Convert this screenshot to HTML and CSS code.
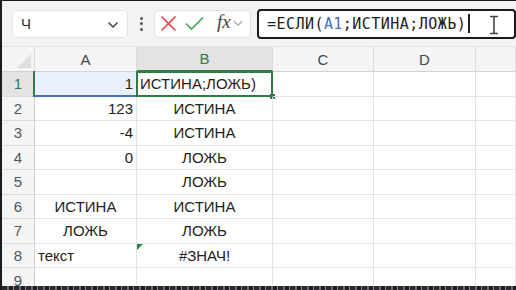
FILE: index.html
```html
<!DOCTYPE html>
<html lang="ru">
<head>
<meta charset="utf-8">
<link rel="stylesheet" href="styles.css">
</head>
<body>
<div class="frame">
  <div class="toolbar">
    <div class="namebox">
      <span class="name">Ч</span>
      <svg class="chev" width="12" height="8" viewBox="0 0 12 8"><path d="M1.5 1.5 L6 6 L10.5 1.5" fill="none" stroke="#444" stroke-width="1.5"/></svg>
    </div>
    <div class="dots"><span></span><span></span><span></span></div>
    <div class="fbtns">
      <svg width="17" height="17" viewBox="0 0 17 17"><path d="M1.5 1.5 L15.5 15.5 M15.5 1.5 L1.5 15.5" stroke="#e0454a" stroke-width="1.7" fill="none"/></svg>
      <svg width="19" height="15" viewBox="0 0 19 15"><path d="M1 7.5 L6.5 13 L18 1.5" stroke="#4aa65b" stroke-width="1.7" fill="none"/></svg>
      <span class="fx">fx</span>
      <svg class="chev2" width="10" height="7" viewBox="0 0 10 7"><path d="M1 1.2 L5 5.2 L9 1.2" fill="none" stroke="#aaa" stroke-width="1.3"/></svg>
    </div>
    <div class="formula">
      <span class="ftext">=ЕСЛИ(<span class="ref">A1</span>;ИСТИНА;ЛОЖЬ)</span><span class="caret"></span>
      <svg class="ibeam" width="10" height="20" viewBox="0 0 10 20"><path d="M1 1.5 H9 M5 1.5 V18.5 M1 18.5 H9" stroke="#444" stroke-width="1.6" fill="none"/></svg>
    </div>
  </div>
  <div class="sheet">
    <div class="grid">
      <div class="corner"><span class="tri"></span></div>
      <div class="ch">A</div>
      <div class="ch sel">B</div>
      <div class="ch">C</div>
      <div class="ch">D</div>
      <div class="ch"></div>

      <div class="rh selr">1</div>
      <div class="c r refcell">1</div>
      <div class="c l active">ИСТИНА;ЛОЖЬ)</div>
      <div class="c"></div><div class="c"></div><div class="c"></div>

      <div class="rh">2</div>
      <div class="c r">123</div>
      <div class="c m">ИСТИНА</div>
      <div class="c"></div><div class="c"></div><div class="c"></div>

      <div class="rh">3</div>
      <div class="c r">-4</div>
      <div class="c m">ИСТИНА</div>
      <div class="c"></div><div class="c"></div><div class="c"></div>

      <div class="rh">4</div>
      <div class="c r">0</div>
      <div class="c m">ЛОЖЬ</div>
      <div class="c"></div><div class="c"></div><div class="c"></div>

      <div class="rh">5</div>
      <div class="c"></div>
      <div class="c m">ЛОЖЬ</div>
      <div class="c"></div><div class="c"></div><div class="c"></div>

      <div class="rh">6</div>
      <div class="c m">ИСТИНА</div>
      <div class="c m">ИСТИНА</div>
      <div class="c"></div><div class="c"></div><div class="c"></div>

      <div class="rh">7</div>
      <div class="c m">ЛОЖЬ</div>
      <div class="c m">ЛОЖЬ</div>
      <div class="c"></div><div class="c"></div><div class="c"></div>

      <div class="rh">8</div>
      <div class="c l">текст</div>
      <div class="c m err">#ЗНАЧ!</div>
      <div class="c"></div><div class="c"></div><div class="c"></div>

      <div class="rh last">9</div>
      <div class="c"></div><div class="c"></div><div class="c"></div><div class="c"></div><div class="c"></div>
    </div>
  </div>
  <div class="torn"></div>
</div>
</body>
</html>
```

FILE: styles.css
```css
* { box-sizing: border-box; }
html, body { margin: 0; padding: 0; background: #fff; }
body { width: 516px; height: 290px; overflow: hidden; font-family: "Liberation Sans", Arial, sans-serif; }

.frame {
  width: 516px; height: 290px;
  border-left: 2px solid #1c1c1c;
  border-top: 1px solid #1c1c1c;
  display: flex; flex-direction: column;
  overflow: hidden;
}

.toolbar {
  height: 46px; flex: none;
  background: #f3f3f3;
  display: flex; align-items: center;
  padding-left: 10px;
  border-bottom: 1px solid #e4e4e4;
}
.namebox {
  width: 116px; height: 28px;
  background: #fff; border: 1px solid #e2e2e2; border-radius: 5px;
  display: flex; align-items: center; justify-content: space-between;
  padding: 0 8px 0 8px;
}
.name { font-size: 15px; color: #333; }
.chev { margin-top: 2px; }
.dots { width: 26px; display: flex; flex-direction: column; align-items: center; gap: 2.5px; }
.dots span { width: 3px; height: 3px; border-radius: 50%; background: #555; }
.fbtns {
  width: 97px; height: 28px;
  background: #fff; border: 1px solid #e2e2e2; border-radius: 5px;
  display: flex; align-items: center;
  padding-left: 5px; gap: 8px;
}
.fx { font-family: "Liberation Serif", "Times New Roman", serif; font-style: italic; font-size: 19px; color: #444; margin-left: 5px; margin-top: -3px; }
.chev2 { margin-left: -6px; }
.formula {
  margin-left: 6px;
  width: 259px; height: 30px;
  border: 2px solid #1a1a1a; border-radius: 4px;
  background: #fff;
  display: flex; align-items: center;
  padding-left: 8px;
  position: relative;
}
.ftext { font-family: "DejaVu Sans Mono", "Liberation Mono", monospace; font-size: 15px; letter-spacing: 0.45px; color: #222; }
.ref { color: #3f6fc4; }
.caret { width: 1.5px; height: 19px; background: #222; margin-left: 2px; }
.ibeam { position: absolute; left: 230px; top: 4px; }

.sheet { flex: 1; overflow: hidden; }
.grid {
  display: grid;
  grid-template-columns: 33px 102px 136px 101px 102px 1fr;
  grid-template-rows: 25px repeat(9, 24.5px);
}
.corner {
  background: #f5f5f5; border-right: 1px solid #dcdcdc; border-bottom: 1px solid #d2d2d2;
  position: relative;
}
.tri {
  position: absolute; right: 3px; bottom: 3px;
  width: 0; height: 0;
  border-left: 14px solid transparent;
  border-bottom: 14px solid #dedede;
}
.ch {
  background: #f5f5f5;
  border-right: 1px solid #dcdcdc; border-bottom: 1px solid #d2d2d2;
  display: flex; align-items: center; justify-content: center;
  font-size: 15px; color: #444;
}
.ch.sel { background: #e3e3e3; color: #2e7a48; border-bottom: 2px solid #2e7a48; }
.rh {
  background: #f5f5f5;
  border-right: 1px solid #d2d2d2; border-bottom: 1px solid #dcdcdc;
  display: flex; align-items: center; justify-content: center;
  font-size: 15px; color: #555;
}
.rh.last { align-items: flex-start; padding-top: 4px; }
.rh.selr { background: #e3e3e3; color: #2e7a48; }
.c {
  border-right: 1px solid #e3e3e3; border-bottom: 1px solid #e3e3e3;
  display: flex; align-items: center;
  font-size: 15px; color: #222;
  padding: 0 3px;
  white-space: nowrap;
  position: relative;
}
.c.r { justify-content: flex-end; }
.c.m { justify-content: center; }
.c.l { justify-content: flex-start; }
.refcell { background: #eaf0fb; }
.refcell::before {
  content: ""; position: absolute; left: -2px; top: -1px; bottom: -1px; width: 2px; background: #2e7a48;
}
.refcell::after {
  content: ""; position: absolute; left: -1px; right: -1px; bottom: -1px; height: 2px; background: #3f6fc4;
}
.active { overflow: visible; }
.active::before {
  content: ""; position: absolute; left: -1px; top: -1px; right: -1px; bottom: -1px;
  border: 2px solid #2e7a48;
}
.active::after {
  content: ""; position: absolute; right: -3px; bottom: -3px; width: 5px; height: 5px; background: #2e7a48;
}
.err::before {
  content: ""; position: absolute; left: 0; top: 0;
  border-top: 6px solid #2e8b3e; border-right: 6px solid transparent;
}

.torn {
  height: 4px; flex: none;
  background: repeating-linear-gradient(90deg, #2a2a30 0 5px, #6a6a78 5px 7px, #1e1e24 7px 11px, #8a8a8a 11px 12px);
}
```
